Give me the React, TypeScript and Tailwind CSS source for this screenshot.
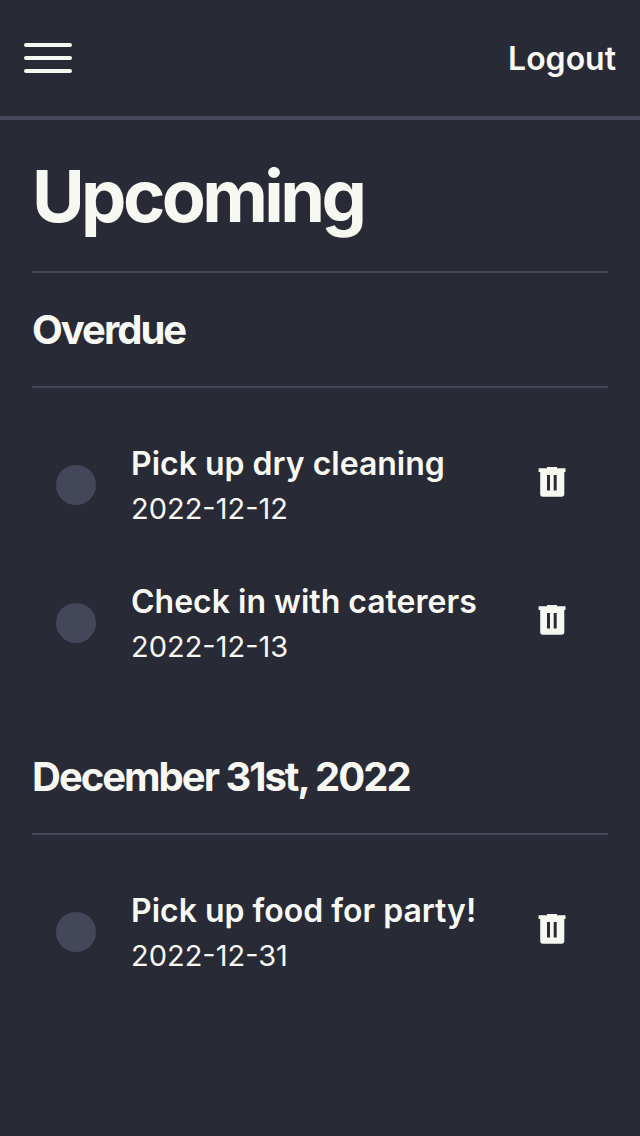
type Task = { id: string; name: string; due: string };
type Group = { title: string; tasks: Task[] };

const groups: Group[] = [
  {
    title: "Overdue",
    tasks: [
      { id: "dry-cleaning", name: "Pick up dry cleaning", due: "2022-12-12" },
      { id: "caterers", name: "Check in with caterers", due: "2022-12-13" },
    ],
  },
  {
    title: "December 31st, 2022",
    tasks: [{ id: "party-food", name: "Pick up food for party!", due: "2022-12-31" }],
  },
];

function TrashIcon() {
  return (
    <svg viewBox="0 0 32 32" className="size-8" fill="currentColor" aria-hidden="true">
      <path
        fillRule="evenodd"
        d="M11 1h10v1.300h8.500V6H28.300v22a2.700 2.700 0 0 1-2.700 2.700H6.900A2.700 2.700 0 0 1 4.200 28V6H2.600V2.300H11zM11 9v15.500h3V9zM17.700 9v15.500h3V9z"
      />
    </svg>
  );
}

function TaskRow({ task }: { task: Task }) {
  return (
    <li className="flex items-center px-6 py-6">
      <input
        type="checkbox"
        id={task.id}
        className="size-10 shrink-0 appearance-none rounded-full bg-[#44475a] checked:bg-[#f8f8f2]"
      />
      <label htmlFor={task.id} className="ml-[35px] flex-1">
        <span className="block text-[32px] leading-12 font-semibold">{task.name}</span>
        <span className="block text-[29px] leading-[42px]">{task.due}</span>
      </label>
      <button type="button" aria-label={"Delete " + task.name} className="mr-4 mb-1.5">
        <TrashIcon />
      </button>
    </li>
  );
}

export default function App() {
  return (
    <div className="min-h-screen bg-[#282a36] font-['Inter',sans-serif] text-[#f8f8f2]">
      <header className="flex h-30 items-center justify-between border-b-4 border-[#44475a] px-6">
        <button type="button" aria-label="Open menu" className="flex w-12 flex-col gap-[9px]">
          <span className="h-1 rounded-full bg-current" />
          <span className="h-1 rounded-full bg-current" />
          <span className="h-1 rounded-full bg-current" />
        </button>
        <button type="button" className="pt-0.5 text-[32px] leading-12 font-semibold">
          Logout
        </button>
      </header>
      <main className="px-8 pt-8">
        <h1 className="border-b-2 border-[#44475a] pb-[31px] text-[72px] leading-[88px] font-bold tracking-tighter">
          Upcoming
        </h1>
        {groups.map((group) => (
          <section key={group.title} className="pb-7">
            <h2 className="border-b-2 border-[#44475a] py-8 text-[40px] leading-[49px] font-bold tracking-tighter">
              {group.title}
            </h2>
            <ul className="pt-7">
              {group.tasks.map((task) => (
                <TaskRow key={task.id} task={task} />
              ))}
            </ul>
          </section>
        ))}
      </main>
    </div>
  );
}
